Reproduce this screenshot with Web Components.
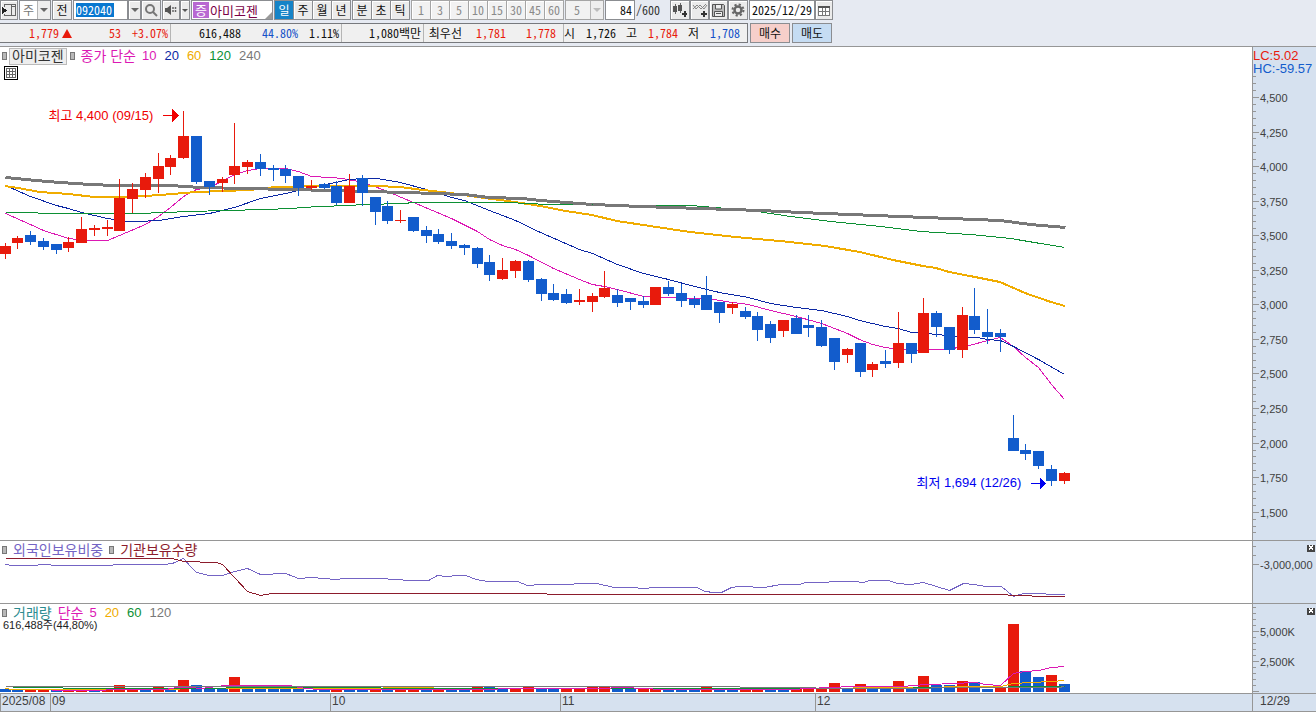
<!DOCTYPE html>
<html lang="ko">
<head>
<meta charset="utf-8">
<title>아미코젠 차트</title>
<style>
  html, body { margin: 0; height: 100%; }
  body { font-family: "Noto Sans Mono CJK KR", "Noto Sans CJK KR", sans-serif; font-size: 12px; color: #111; background: #fff; }
</style>
</head>
<body>
<stock-chart-app></stock-chart-app>
<script>
const define = (name, html, setup) => {
  const tpl = document.createElement('template');
  tpl.innerHTML = html;
  customElements.define(name, class extends HTMLElement {
    constructor() {
      super();
      this.attachShadow({ mode: 'open' }).append(tpl.content.cloneNode(true));
    }
    connectedCallback() { if (setup) setup(this, this.shadowRoot); }
  });
};

/* ---------- toolbar pieces ---------- */
define('tool-button', `
<style>
  :host { display: block; height: 20px; width: var(--w, 20px); }
  button { box-sizing: border-box; width: 100%; height: 100%; padding: 0; border: 1px solid #8b8d91; background: #ebebeb;
    font: inherit; line-height: 16px; color: inherit; display: flex; align-items: center; justify-content: center; box-shadow: inset 1px 1px #fff; }
  :host([active]) button { background: #1583c7; color: #fff; box-shadow: none; }
  :host([dim]) button { background: #f2f2f2; color: #8a8a8a; border-color: #a5a5a5; }
  :host([buy]) button { background: #f6cfca; box-shadow: none; }
  :host([sell]) button { background: #c5dcf3; box-shadow: none; }
</style>
<button type="button"><slot></slot></button>`, (el, root) => {
  if (el.title) root.querySelector('button').setAttribute('aria-label', el.title);
});

define('drop-select', `
<style>
  :host { display: block; position: relative; width: var(--w); height: 20px; box-sizing: border-box; border: 1px solid #8b8d91; background: #fff; }
  select { appearance: none; border: 0; margin: 0; padding: 0 0 0 var(--pad, 3px); width: 100%; height: 18px; background: transparent; font: inherit; color: inherit; outline: 0; line-height: 18px; opacity: 1; }
  :host([dim]) { background: #f2f2f2; color: #8a8a8a; border-color: #a5a5a5; }
  span { position: absolute; right: 0; top: 0; bottom: 0; width: 12px; display: grid; place-items: center; background: #eee; border-left: 1px solid #b5b5b5; pointer-events: none; color: #666; }
  :host([dim]) span { color: #bbb; }
  :host([corner]) span { background: none; border: 0; place-items: end; }
</style>
<select></select><span><svg width="8" height="4"><path d="M0 0h8l-4 4z" fill="currentColor"/></svg></span>`, (el, root) => {
  const s = root.querySelector('select');
  s.setAttribute('aria-label', el.getAttribute('label'));
  s.append(new Option(el.getAttribute('value')));
  if (el.hasAttribute('corner')) root.querySelector('span').innerHTML = '<svg width="8" height="8"><path d="M8 1v7H1z" fill="#999"/></svg>';
});

define('chart-toolbar', `
<style>
  :host { display: flex; height: 20px; align-items: stretch; }
  .group { display: flex; margin-right: 1px; }
  .group > tool-button + tool-button { margin-left: -1px; }
  label { display: flex; height: 20px; box-sizing: border-box; border: 1px solid #8b8d91; background: #fff; }
  input { box-sizing: border-box; width: 100%; height: 17px; border: 0; padding: 0 2px; margin: 0; font: inherit; color: #111; background: transparent; outline: 0; }
  .code { width: 55px; } .code input { color: #fff; background: linear-gradient(#0878d0, #0878d0) 2px 2px / 38px 14px no-repeat; padding-left: 2px; }
  .gap { width: 1px; }
  .stock { display: flex; border: 1px solid #8b8d91; box-sizing: border-box; height: 20px; width: 82px; background: #fff; align-items: center; color: #7a0046; margin-right: 1px; }
  .stock b { font-weight: 400; background: #b868d2; color: #fff; width: 16px; height: 16px; line-height: 16px; text-align: center; margin-left: 1px; font-size: 13px; flex: none; }
  .stock drop-select { --w: 63px; --pad: 1px; border: 0; height: 18px; font-size: 13px; }
  .count { width: 30px; } .count input { text-align: right; }
  .total { width: 35px; line-height: 19px; padding-left: 1px; box-sizing: border-box; color: #333; }
  .date { width: 66px; }
  .date input { padding: 0 1px 0 2px; }
</style>
<tool-button title="패널" style="--w:18px"><svg width="14" height="14" shape-rendering="crispEdges"><path d="M0 4v7l5-3.500z" fill="#222"/><path d="M2.500 4V1.500h11v11h-11V11M9.500 1.500v11M9.500 3.500h4" fill="none" stroke="#666"/></svg></tool-button>
<div class="gap"></div>
<drop-select label="구분" value="주" style="--w:32px;color:#777"></drop-select>
<div class="gap"></div>
<tool-button style="--w:20px">전</tool-button>
<div class="gap"></div>
<label class="code"><input value="092040" aria-label="종목코드"></label>
<tool-button title="목록" style="--w:13px"><svg width="8" height="4"><path d="M0 0h8l-4 4z" fill="#666"/></svg></tool-button>
<tool-button title="검색" style="--w:20px"><svg width="14" height="14"><circle cx="6" cy="6" r="4" fill="none" stroke="#777" stroke-width="2"/><path d="M9 9l4 4" stroke="#777" stroke-width="2"/></svg></tool-button>
<div class="gap"></div>
<tool-button title="소리" style="--w:18px"><svg width="14" height="12"><path d="M1 4h2l4-3v10L3 8H1z" fill="#555"/><path d="M9 3v6M11.500 3v6" stroke="#666" stroke-width="1.500" stroke-dasharray="2 1"/></svg></tool-button>
<tool-button title="소리 설정" style="--w:10px"><svg width="6" height="3"><path d="M0 0h6l-3 3z" fill="#555"/></svg></tool-button>
<div class="gap"></div>
<div class="stock"><b>증</b><drop-select corner label="종목" value="아미코젠"></drop-select></div>
<div class="group" id="period"></div>
<div class="group" id="unit"></div>
<div class="group" id="minutes"></div>
<drop-select dim label="간격" value="5" style="--w:39px;--pad:8px"></drop-select>
<div class="gap"></div>
<label class="count"><input value="84" aria-label="표시 개수"></label>
<div class="total">/600</div>
<tool-button title="캔들 추가" style="--w:20px"><svg width="16" height="16" shape-rendering="crispEdges"><path d="M3 2v10M8 1v10" stroke="#666"/><path d="M1 4h4v6H1zM6 3h4v6H6z" fill="#555"/><path d="M10 12h5M13 9v6" stroke="#333" stroke-width="2"/></svg></tool-button>
<tool-button title="지표 추가" style="--w:19px"><svg width="16" height="16"><path d="M1 7l4-4 4 4 5-5M1 3l3 4 4-4 4 4 3-4" fill="none" stroke="#888"/><path d="M9 12h6M12 9v6" stroke="#333" stroke-width="2"/></svg></tool-button>
<tool-button title="저장" style="--w:19px"><svg width="15" height="15"><path d="M1.500 1.500h11l1 1v11h-12z" fill="#bbb" stroke="#555"/><path d="M4.500 2v4h6V2M3.500 13V8.500h8V13M5 10.500h5" fill="#eee" stroke="#555"/></svg></tool-button>
<tool-button title="설정" style="--w:20px"><svg width="14" height="14"><circle cx="7" cy="7" r="3.500" fill="none" stroke="#666" stroke-width="2.500"/><circle cx="7" cy="7" r="5.500" fill="none" stroke="#666" stroke-width="2" stroke-dasharray="2.200 2.120"/></svg></tool-button>
<div class="gap"></div>
<label class="date"><input value="2025/12/29" aria-label="날짜"></label>
<tool-button title="달력" style="--w:18px"><svg width="12" height="11" shape-rendering="crispEdges"><path d="M.5 1.500h11v9H.5zM4.500 3v7M7.500 3v7M1 6.500h10" fill="#fff" stroke="#777"/><path d="M0 1h12v2H0z" fill="#555"/></svg></tool-button>
`, (el, root) => {
  const fill = (id, names, w, attr) => root.getElementById(id).innerHTML =
    names.map((n, i) => `<tool-button ${attr || (id === 'period' && !i ? 'active' : '')} style="--w:${w}px">${n}</tool-button>`).join('');
  fill('period', ['일', '주', '월', '년'], 20);
  fill('unit', ['분', '초', '틱'], 20);
  fill('minutes', [1, 3, 5, 10, 15, 30, 45, 60], 20, 'dim');
});

define('quote-bar', `
<style>
  :host { display: flex; height: 20px; }
  dl { box-sizing: border-box; margin: 0; width: 748px; display: flex; border: 1px solid #77797d; border-left: 0; background: #f0f0f0; line-height: 18px; }
  div { display: flex; justify-content: flex-end; gap: 11px; padding-right: 2px; box-sizing: border-box; border-right: 1px solid #b5b5b5; }
  div:last-child { border: 0; }
  dd, dt { margin: 0; white-space: nowrap; }
  .up { color: #e81a0c; } .down { color: #1450c8; }
  .a { width: 171px; } .b { width: 171px; } .c { width: 82px; }
  .d { width: 140px; gap: 20px; padding-right: 7px; } .d dt { margin-right: -6px; }
  .e { flex: 1; padding-right: 7px; gap: 10px; }
  .e dt { width: 12px; }
  .tri { display: inline-block; margin-left: 3px; border: 5px solid transparent; border-top: 0; border-bottom: 9px solid #e81a0c; }
  tool-button { --w: 40px; margin-left: 2px; }
</style>
<dl>
  <div class="a"><dd class="up" style="margin-right:26px">1,779<i class="tri"></i></dd><dd class="up">53</dd><dd class="up">+3.07%</dd></div>
  <div class="b"><dd style="margin-right:10px">616,488</dd><dd class="down">44.80%</dd><dd>1.11%</dd></div>
  <div class="c"><dd>1,080백만</dd></div>
  <div class="d"><dt>최우선</dt><dd class="up">1,781</dd><dd class="up">1,778</dd></div>
  <div class="e"><dt>시</dt><dd>1,726</dd><dt>고</dt><dd class="up">1,784</dd><dt>저</dt><dd class="down">1,708</dd></div>
</dl>
<tool-button buy>매수</tool-button><tool-button sell>매도</tool-button>`);

/* ---------- chart ---------- */
const UP = '#e81a0c', DOWN = '#125ccc';
const barX = i => Math.floor(5 + 12.76 * i + 0.1);

/* colour, high, body top, body bottom, low */
const candles = `R243 246 254 259|R236 238 243 249|B231 235 242 245|B238 241 247 250|B244 244 250 254|R237 242 248 252|R217 229 243 243|R225 228 230 236|R220 227 229 236|R179 198 231 231|R183 189 199 213|R173 177 190 198|R153 166 179 193|R155 158 167 175|R111 136 158 159|B136 136 182 184|B181 181 187 195|R177 179 183 192|R123 166 175 184|R160 162 167 174|B154 162 169 176|B165 168 170 181|B165 169 176 183|B176 176 188 196|R180 186 188 190|B183 184 188 189|B181 186 203 205|R174 186 203 203|B175 178 193 206|B197 197 212 225|B201 206 221 224|R210 220 221 223|B217 217 231 232|B226 230 236 243|B229 234 242 244|B233 241 246 249|B244 245 248 255|B247 248 264 268|B255 262 275 281|R258 270 279 280|R260 261 271 278|B260 261 280 282|B278 279 294 301|B284 293 300 301|B289 294 303 304|R289 300 302 305|R293 296 302 312|R271 288 297 298|B289 295 303 307|B298 298 302 310|B296 301 305 308|R287 287 305 305|B281 287 294 296|B284 293 301 307|B296 299 305 308|B276 295 310 310|B302 302 313 323|R302 304 308 314|B307 311 317 319|B312 316 330 341|B321 324 338 343|R320 320 331 337|B315 318 334 334|B315 325 328 337|B320 327 346 347|B338 338 362 370|R348 349 355 363|B343 343 372 377|R362 364 370 377|B350 361 364 368|R312 343 363 368|B343 343 354 363|R298 313 353 353|B311 313 327 337|B327 327 350 354|R307 315 350 358|B288 316 330 334|B309 332 337 344|B329 333 337 352|B415 438 451 451|B444 450 454 460|B451 451 466 469|B465 469 481 486|R472 473 481 484`
  .split('|').map(s => [s[0] === 'R' ? UP : DOWN, ...s.slice(1).split(' ').map(Number)]);

const volumes = 'B689 B690 R690 R690 B690 R690 R690 B690 R690 R685 R690 B689 R687 B690 R680 B685 B689 B689 R677 B688 B688 B688 B689 B689 B690 B690 R690 B690 B690 R687 B690 R690 R690 B689 R689 B689 B689 R687 B687 B689 R689 R687 B689 B689 R689 R689 R687 R687 B689 B689 R689 R689 B690 B690 B690 R687 B690 B690 R690 R689 B690 B690 R689 R689 R689 R683 B689 R684 B687 B689 R681 B688 R676 B685 B685 R681 B682 B689 R688 R624 B671 B677 R675 B684'.split(' ');

const line = (color, width, pts) => `<polyline points="${pts}" fill="none" stroke="${color}" stroke-width="${width}"/>`;
const PURPLE = '#7464c4', PINK = '#dc18b4', NAVY = '#0c28a4', GOLD = '#f0ac00', GREEN = '#0c9034', GREY = '#787878';

const drawings = {
  price: () =>
    line(PINK, 1, '5,213 30,224 43,230 68,238 85,240 107,240 119,235 145,224 158,216 170,207 183,196 196,189 209,187 221,181 234,174 247,170 260,168 285,168 298,171 311,176 330,177 342,178 363,182 382,189 413,202 451,218 477,231 489,239 502,245 515,249 528,255 553,268 579,279 592,284 604,286 617,289 643,296 660,297 690,298 713,299 732,302 748,304 770,310 796,316 821,323 847,333 859,339 872,344 885,347 898,349 913,350 928,349 949,349 957,347 969,345 987,340 1000,337 1013,346 1025,357 1038,367 1051,384 1064,399') +
    line(NAVY, 1, '5,185 30,196 56,205 68,208 81,212 107,218 127,221 138,221 158,220 183,216 209,213 234,207 260,198 285,193 311,187 330,183 349,179 363,178 377,178 400,182 426,189 451,197 464,200 489,210 515,220 540,232 579,249 592,253 617,264 643,273 668,279 694,286 719,292 748,297 770,303 796,307 821,310 847,316 859,320 885,326 898,328 911,332 927,333 936,334 968,337 977,337 987,339 1000,340 1013,346 1038,359 1064,374') +
    `<g transform="translate(-.5 -.5)">` + line(GOLD, 2, '5,186 18,188 40,192 69,194 94,197 130,197 160,195 196,192 250,190 275,187 320,186 375,186 400,187 423,190 451,193 477,197 500,200 515,202 540,206 566,211 592,215 617,221 650,226 690,232 735,237 780,241 825,246 860,252 893,260 923,266 936,268 949,272 970,276 1000,282 1025,293 1051,302 1065,306') + `</g>` +
    line(GREEN, 1, '5,212 37,212 38,213 138,213 190,211 225,210 265,209 290,208 318,206 349,205 362,204 406,203 410,202 508,202 547,204 571,204 636,205 690,205 715,207 750,210 790,216 830,221 880,226 920,231 970,234 1010,238 1040,243 1064,247') +
    `<g transform="translate(0 -1)">` + line(GREY, 3, '5,178 35,181 60,183 90,185 115,186 170,186 200,188 245,189 290,190 330,191 367,192 405,193 464,195 489,198 522,199 540,201 566,203 592,205 617,206 640,207 700,209 760,211 800,213 850,215 900,217 950,219 1000,221 1030,225 1065,228') + `</g>` +
    candles.map(([c, h, t, b, l], i) => {
      const x = barX(i);
      return `<path fill="${c}" transform="translate(-.5 -.5)" d="M${x - 5} ${t}h11V${b}h-11zM${x} ${h}h1V${l}h-1z"/>`;
    }).join('') +
    `<g class="note" fill="#f00000"><text x="48" y="119">최고 4,400 (09/15)</text><path transform="translate(-.5 -.5)" d="M163 115h9v-6l7 6.500-7 6.500v-6h-9z"/></g>
     <g class="note" fill="#0000f0"><text x="916" y="486">최저 1,694 (12/26)</text><path transform="translate(-.5 -.5)" d="M1031 483h9v-6l6 6.500-6 6.500v-6h-9z"/></g>`,
  holding: () =>
    line(PURPLE, 1, '5,564 12,565 37,565 38,564 50,564 51,565 112,565 113,564 163,564 172,563 183,558 190,566 196,572 209,575 222,575 234,571 247,568 260,574 285,573 298,578 311,577 335,579 345,578 380,578 410,580 428,580 437,575 445,576 458,575 465,575 476,579 487,581 517,581 527,585 533,585 534,584 573,584 574,583 596,583 614,587 637,587 638,588 648,588 649,587 696,587 705,591 713,592 721,592 731,587 739,586 752,586 753,587 764,587 780,584 799,584 805,582 828,582 829,581 854,581 863,582 869,580 888,580 897,583 910,584 923,582 949,590 963,583 974,584 985,586 1001,586 1013,596 1023,593 1045,593 1046,594 1064,594') +
    line('#8c1c2c', 1, '5,558 172,558 183,561 216,562 222,564 234,577 247,591 260,595 272,593 546,593 547,594 1007,594 1008,595 1031,595 1032,596 1064,596'),
  volume: () =>
    volumes.map((v, i) => `<path fill="${v[0] === 'R' ? UP : DOWN}" transform="translate(-.5 -.5)" d="M${barX(i) - 5} ${v.slice(1)}h11V692h-11z"/>`).join('') +
    line(GOLD, 1, '5,688 12,689 176,689 183,688 240,688 382,688 383,687 433,687 434,688 800,688 905,687 943,687 944,686 1000,686 1013,683 1030,682 1051,681 1064,680') +
    line(GREEN, 1, '12,687 62,687 63,688 225,688 226,687 380,687 381,688 815,688 905,688 920,687 1007,687 1008,686 1064,686') +
    line(PINK, 1, '51,690 100,690 112,689 165,689 177,687 190,687 200,688 225,685 289,685 305,688 320,689 400,689 598,688 624,687 662,689 790,689 828,687 853,686 905,686 910,685 930,684 975,682 985,684 1000,685 1013,673 1025,671 1038,670 1051,667 1064,666') +
    line(GREY, 1, '5,686 739,686 740,687 815,687 816,688 930,688 931,687 1058,687 1064,686'),
};

const tick = (y, major) => `<path d="M0 ${y}h${major ? 6 : 3}" stroke="#969696"/>`;
const label = (y, text) => `<text x="7" y="${y + 4}">${text}</text>`;
const closeBox = y => `<g transform="translate(54 ${y})"><path d="M0 0h8v7h-8z" fill="#444"/><path d="M2 1l4 4M6 1l-4 4" stroke="#fff"/></g>`;
const axes = {
  price: () => {
    let s = '';
    for (let k = -3; k <= 63; k++) {
      const y = Math.round(97 + k * 6.912);
      s += tick(y, k >= 0 && k % 5 === 0 && k <= 60);
      if (k >= 0 && k % 5 === 0 && k <= 60) s += label(y, (4500 - k * 50).toLocaleString('en-US'));
    }
    return `<g class="big"><text x="0" y="59" fill="${UP}">LC:5.02</text><text x="0" y="72" fill="${DOWN}">HC:-59.57</text></g>` + s;
  },
  holding: () => tick(546) + tick(555) + tick(564, true) + label(564, '-3,000,000') + closeBox(544),
  volume: () => [607, 613, 619, 625, 637, 643, 649, 655, 667, 673, 679, 685].map(y => tick(y)).join('') +
    tick(631, true) + tick(661, true) + tick(691, true) + label(631, '5,000K') + label(661, '2,500K') + closeBox(607),
};

define('chart-panel', `
<style>
  :host { display: grid; grid-template-columns: minmax(0, 1fr) 64px; border-bottom: 1px solid #969696; min-height: 0; box-sizing: border-box; }
  .plot { display: grid; overflow: hidden; min-height: 0; }
  .plot > * { grid-area: 1 / 1; min-width: 0; min-height: 0; }
  header { align-self: start; z-index: 1; }
  svg { display: block; width: 100%; height: 100%; min-height: 0; contain: size; shape-rendering: crispEdges; }
  .axis { background: #d6e1ef; border-left: 1px solid #969696; min-height: 0; overflow: hidden; }
  text { font: 11px "Liberation Sans", sans-serif; fill: #404040; }
  .big text, .note text { font: 13px "Liberation Sans", "Noto Sans CJK KR", sans-serif; fill: inherit; }
  .big text[fill="${UP}"] { fill: ${UP}; } .big text[fill="${DOWN}"] { fill: ${DOWN}; }
</style>
<div class="plot"><svg role="img"><g></g></svg><header><slot></slot></header></div>
<div class="axis"><svg><g></g></svg></div>`, (el, root) => {
  const kind = el.getAttribute('kind'), top = el.getAttribute('top');
  const [plot, axis] = root.querySelectorAll('g');
  plot.setAttribute('transform', `translate(.5 ${.5 - top})`);
  axis.setAttribute('transform', `translate(0 ${.5 - top})`);
  plot.innerHTML = drawings[kind]();
  axis.innerHTML = axes[kind]();
  root.querySelector('svg').setAttribute('aria-label', el.getAttribute('label'));
});

define('chart-legend', `
<style>
  :host { display: flex; align-items: center; height: 16px; padding: 1px 0 0 2px; font: 13px "Liberation Sans", "Noto Sans CJK KR", sans-serif; line-height: 16px; }
  ::slotted(span) { margin-right: 8px; white-space: nowrap; }
  ::slotted(b) { font-weight: 400; font-size: 14px; margin-right: 6px; white-space: nowrap; }
  ::slotted(i) { box-sizing: border-box; width: 5px; height: 8px; background: #b8b8b8; border: 1px solid #777; margin-right: 6px; flex: none; }
  ::slotted(button) { height: 17px; border: 1px solid #bbb; outline: 0; background: #eee; padding: 0 2px; margin: 0 3px 0 -4px; font: inherit; font-size: 14px; line-height: 14px; color: #333; }
</style><slot></slot>`);

define('time-axis', `
<style>
  :host { display: flex; height: 18px; box-sizing: border-box; background: #d6e1ef; border-bottom: 1px solid #969696; font: 12px "Liberation Sans", sans-serif; line-height: 15px; color: #404040; }
  span { box-sizing: border-box; padding-left: 1px; border-left: 1px solid #969696; }
  span:first-child { border: 0; padding: 0; }
  .rest { flex: 1; } .now { width: 64px; padding-left: 7px; }
</style>
<span style="width:50px">2025/08</span><span style="width:280px">09</span><span style="width:230px">10</span><span style="width:255px">11</span><span class="rest">12</span><span class="now">12/29</span>`);

define('stock-chart-app', `
<style>
  :host { display: flex; flex-direction: column; height: 100vh; min-height: 500px; overflow: hidden; }
  .top { background: #e6eaf2; border-bottom: 1px solid #969696; display: grid; gap: 3px; padding-bottom: 3px; flex: none; }
  .main { flex: 1; } .holding { flex: 0 0 63px; } .volume { flex: 0 0 90px; }
  .grid-toggle { display: block; margin: 2px 0 0 4px; width: 14px; height: 14px; padding: 0; border: 1px solid #000; background: #fff; }
  .grid-toggle svg { display: block; }
  .amount { font: 11px "Liberation Sans", "Noto Sans CJK KR", sans-serif; line-height: 12px; padding-left: 3px; margin: -2px 0 0; color: #222; }
  time-axis { flex: none; }
</style>
<div class="top"><chart-toolbar></chart-toolbar><quote-bar></quote-bar></div>
<chart-panel class="main" kind="price" top="47" label="일봉 가격 차트">
  <chart-legend><i></i><button>아미코젠</button><i></i><b style="color:#dc18b4">종가 단순</b><span style="color:#dc18b4">10</span><span style="color:#0c28a4">20</span><span style="color:#f0ac00">60</span><span style="color:#0c9034">120</span><span style="color:#787878">240</span></chart-legend>
  <button class="grid-toggle" aria-label="표 보기"><svg width="12" height="12" shape-rendering="crispEdges"><path d="M1.500 1.500h9v9h-9zM4.500 1v9M7.500 1v9M1 4.500h9M1 7.500h9" fill="none" stroke="#666"/></svg></button>
</chart-panel>
<chart-panel class="holding" kind="holding" top="541" label="외국인 및 기관 보유">
  <chart-legend><i></i><b style="color:#7464c4">외국인보유비중</b><i></i><b style="color:#8c1c2c">기관보유수량</b></chart-legend>
</chart-panel>
<chart-panel class="volume" kind="volume" top="604" label="거래량">
  <chart-legend><i></i><b style="color:#2c8c90">거래량</b><b style="color:#dc18b4">단순</b><span style="color:#dc18b4">5</span><span style="color:#f0ac00">20</span><span style="color:#0c9034">60</span><span style="color:#787878">120</span></chart-legend>
  <p class="amount">616,488주(44,80%)</p>
</chart-panel>
<time-axis></time-axis>`);
</script>
</body>
</html>
